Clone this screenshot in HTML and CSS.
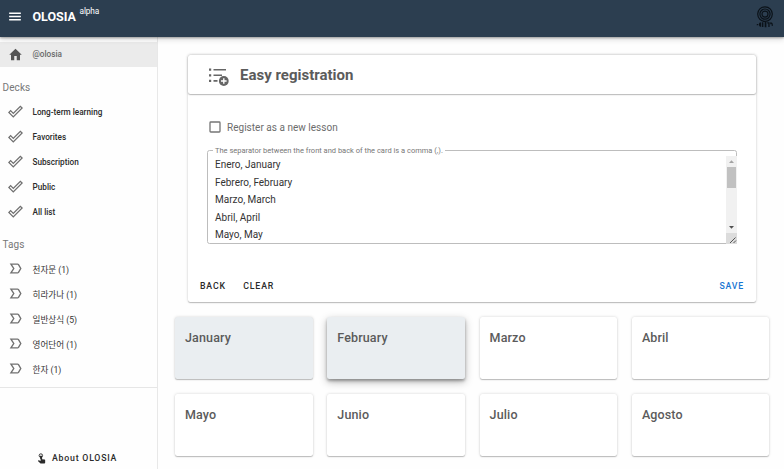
FILE: index.html
```html
<!DOCTYPE html>
<html lang="en">
<head>
<meta charset="utf-8">
<title>OLOSIA</title>
<link rel="stylesheet" href="styles.css">
</head>
<body>
<svg class="defs" width="0" height="0">
  <symbol id="check" viewBox="0 0 24 24"><path d="M19.78,2.2L24,6.42L8.44,22L0,13.55L4.22,9.33L8.44,13.55L19.78,2.2M19.78,5L8.44,16.36L4.22,12.19L2.81,13.55L8.44,19.17L21.19,6.42L19.78,5Z"/></symbol>
  <symbol id="label" viewBox="0 0 24 24"><path d="M4.7 5H15.3C15.9 5 16.4 5.3 16.8 5.8L20.4 12L16.8 18.2C16.4 18.7 15.9 19 15.3 19H4.7L9.2 12Z" fill="none" stroke="currentColor" stroke-width="2.2"/></symbol>
</svg>
<header class="appbar">
  <svg class="icon menu" viewBox="0 0 24 24"><path d="M2,5.2H22V7.8H2V5.2M2,10.7H22V13.3H2V10.7M2,16.2H22V18.8H2V16.2Z"/></svg>
  <div class="brand">OLOSIA<sup>alpha</sup></div>
  <svg class="avatar" viewBox="0 0 18 22">
    <g fill="none" stroke="#0b1219" stroke-width="1.2"><circle cx="9" cy="8.1" r="7.3"/><circle cx="9" cy="8.1" r="5.1"/><circle cx="9" cy="8.1" r="3"/></g>
    <g fill="#0b1219"><path d="M5.200 16.200v4.800a2.400 2.400 0 0 1 0-4.800M6 16.200h1.400v4.800H6zM8.700 15.800h1.700v5.400H8.700zM11.200 16.200h2.400v4.800h-1.300v-3.400h-1.100zM14.200 16.400a2 2 0 0 1 2.600 2v1.600h-1.100v-1.800h-1.500zM.800 18h1.400v1.200H.800z"/></g>
  </svg>
</header>
<div class="body">
  <nav class="sidebar">
    <a class="item active"><svg class="icon" viewBox="0 0 24 24"><path d="M10,21V14.5H14V21H19.2V12.5H22L12,2.7L2,12.5H4.8V21H10Z"/></svg><span>@olosia</span></a>
    <h2>Decks</h2>
    <a class="item"><svg class="icon"><use href="#check"/></svg><span>Long-term learning</span></a>
    <a class="item"><svg class="icon"><use href="#check"/></svg><span>Favorites</span></a>
    <a class="item"><svg class="icon"><use href="#check"/></svg><span>Subscription</span></a>
    <a class="item"><svg class="icon"><use href="#check"/></svg><span>Public</span></a>
    <a class="item"><svg class="icon"><use href="#check"/></svg><span>All list</span></a>
    <h2>Tags</h2>
    <a class="item tag"><svg class="icon"><use href="#label"/></svg><span>천자문 (1)</span></a>
    <a class="item tag"><svg class="icon"><use href="#label"/></svg><span>히라가나 (1)</span></a>
    <a class="item tag"><svg class="icon"><use href="#label"/></svg><span>일반상식 (5)</span></a>
    <a class="item tag"><svg class="icon"><use href="#label"/></svg><span>영어단어 (1)</span></a>
    <a class="item tag"><svg class="icon"><use href="#label"/></svg><span>한자 (1)</span></a>
    <div class="about">
      <svg viewBox="0 0 24 24"><path d="M10 9A1.6 1.6 0 0 1 11.6 7.4A1.6 1.6 0 0 1 13.2 9V13.5L18.6 14.2C19.6 14.4 20 15 20 16V20.5C20 22 19 23 17.5 23H11C10.3 23 9.8 22.7 9.3 22.2L4.2 17.2L5 16.3C5.3 16 5.8 15.9 6.2 16L10 17.3Z"/><circle cx="10.6" cy="5.600" r="3.800" fill="none" stroke="currentColor" stroke-width="2"/><path d="M8.500 6H13.200V13H9.500z"/></svg>
      <span>About OLOSIA</span>
    </div>
  </nav>
  <main>
    <section class="panel">
      <div class="panel-head">
        <svg viewBox="0 0 22 20"><g fill="#666"><path d="M1 1.600h2.200v2.200H1zM1 7.200h2.200v2.200H1zM1 12.800h2.200v2.200H1zM5.500 1.900H18v1.700H5.500zM5.500 7.400h8.500v1.700H5.500zM5.500 13h4v1.700h-4z"/><circle cx="15.800" cy="14" r="4.900"/></g><path d="M15.800 11.200v5.600M13 14h5.600" stroke="#fff" stroke-width="1.400"/></svg>
        <h1>Easy registration</h1>
      </div>
      <label class="check"><svg viewBox="0 0 12 12"><rect x="1" y="1" width="10" height="10" rx=".8" fill="none" stroke="#757575" stroke-width="1.300"/></svg><span>Register as a new lesson</span></label>
      <fieldset class="field">
        <legend><span>The separator between the front and back of the card is a comma (,).</span></legend>
        <div class="text">
          <div class="lines">Enero, January<br>Febrero, February<br>Marzo, March<br>Abril, April<br>Mayo, May</div>
          <div class="scroll">
            <svg viewBox="0 0 11 88"><path fill="#f1f1f1" d="M0 0h11v77H0z"/><path fill="#c1c1c1" d="M1 11h9v21H1z"/><path fill="#a3a3a3" d="M3 7h5L5.5 4.2z"/><path fill="#505050" d="M3 70h5L5.500 72.800z"/><path fill="#dcdcdc" d="M0 77h11v11H0z"/><path d="M4 87l5.500-5.500M7.500 87l2.500-2.500" stroke="#555" stroke-width="1"/></svg>
          </div>
        </div>
      </fieldset>
      <div class="actions"><span>BACK</span><span class="clear">CLEAR</span><span class="save">SAVE</span></div>
    </section>
    <section class="grid">
      <article class="card shaded">January</article>
      <article class="card shaded raised">February</article>
      <article class="card">Marzo</article>
      <article class="card">Abril</article>
      <article class="card">Mayo</article>
      <article class="card">Junio</article>
      <article class="card">Julio</article>
      <article class="card">Agosto</article>
    </section>
  </main>
</div>
</body>
</html>
```
FILE: styles.css
```css
* { box-sizing: border-box; }
body {
  margin: 0;
  height: 469px;
  overflow: hidden;
  display: flex;
  flex-direction: column;
  font-family: Roboto, "Noto Sans CJK KR", sans-serif;
  color: #2b2b2b;
  background: #fefefe;
}
.defs { display: block; flex: none; height: 0; }
.icon { width: 15px; height: 15px; fill: currentColor; flex: none; }
.appbar {
  height: 37px;
  flex: none;
  display: flex;
  align-items: flex-start;
  padding: 0 10px 0 8px;
  background: #2c3e50;
  color: #fff;
  box-shadow: 0 1px 2px rgba(0,0,0,.3), 0 2px 6px rgba(0,0,0,.17);
  position: relative;
}
.menu { margin-top: 9px; width: 14px; }
.brand { margin-left: 10.500px; font-size: 12.5px; font-weight: 700; line-height: 33px; flex: 1; }
.brand sup { font-size: 8.3px; font-weight: 400; line-height: 0; margin-left: 3.500px; vertical-align: 7.500px; letter-spacing: -.1px; }
.avatar { width: 18px; height: 22px; margin-top: 6px; }
.body { flex: 1; display: flex; min-height: 0; }
.sidebar {
  width: 158px;
  flex: none;
  border-right: 1px solid #e8e8e8;
  padding-top: 5px;
  display: flex;
  flex-direction: column;
}
.item {
  height: 25px;
  flex: none;
  display: flex;
  align-items: center;
  gap: 10px;
  padding-left: 7.500px;
  font-size: 8.2px;
  font-weight: 500;
  white-space: nowrap;
}
.item .icon { color: #707070; }
.item.active { background: #ebebeb; color: #686868; }
.item.active .icon { color: #555; margin-top: -1px; }
.item.active span { margin-top: -1px; }
.item.tag { font-size: 8.6px; font-weight: 400; color: #333; }
.sidebar h2 {
  margin: 0;
  height: 32px;
  line-height: 41px;
  padding-left: 2.500px;
  flex: none;
  font-size: 10px;
  font-weight: 400;
  letter-spacing: .1px;
  color: #777;
}
.about {
  flex: 1;
  margin-top: 6px;
  border-top: 1px solid #e6e6e6;
  display: flex;
  align-items: flex-end;
  gap: 5px;
  padding: 0 0 5px 36px;
  font-size: 8.75px;
  font-weight: 500;
  letter-spacing: .78px;
}
.about svg { width: 11px; height: 11px; fill: currentColor; }
.about span { line-height: 11px; }
main { flex: 1; min-width: 0; padding: 18px 15px 0 17px; }
.panel {
  width: 568.500px;
  height: 246.500px;
  margin: 0 auto 15.500px 12.500px;
  background: #fff;
  border-radius: 2.500px;
  display: flex;
  flex-direction: column;
  box-shadow: 0 1px 1px rgba(0,0,0,.22), 0 0 3px rgba(0,0,0,.17);
}
.panel-head {
  height: 39px;
  flex: none;
  display: flex;
  align-items: center;
  padding-left: 20px;
  border-radius: 2.500px;
  box-shadow: 0 1px 1px rgba(0,0,0,.22), 0 0 3px rgba(0,0,0,.17);
}
.panel-head svg { width: 22px; height: 20px; margin-top: 4px; }
.panel-head h1 { margin: 0 0 0 10.500px; font-size: 15px; font-weight: 700; color: #5b5b5b; }
.check {
  margin: 25.500px 0 0 21px;
  height: 14px;
  display: flex;
  align-items: center;
  gap: 6.500px;
  font-size: 10px;
  letter-spacing: .02px;
  color: #6c6c6c;
}
.check svg { width: 12px; height: 12px; }
.check span { margin-top: 1px; }
.field {
  margin: 12.500px 19.500px 0;
  width: 530px;
  height: 98px;
  flex: none;
  border: 1px solid #bdbdbd;
  border-radius: 2.500px;
  padding: 0 0 0 7px;
  min-width: 0;
}
.field legend {
  height: 9px;
  padding: 0 2px 0 2px;
  margin-left: -2px;
  font-size: 7.500px;
  line-height: 9px;
  color: #777;
}
.text { height: 88px; display: flex; justify-content: space-between; }
.lines { font-size: 10px; line-height: 17.500px; color: #333; padding-top: 1px; }
.scroll { width: 11px; height: 88px; margin-right: -1px; padding-top: 1px; }
.scroll svg { display: block; width: 11px; height: 88px; }
.actions {
  margin-top: auto;
  display: flex;
  padding: 0 12px 10px 12.500px;
  font-size: 8.75px;
  line-height: 11px;
  font-weight: 500;
  letter-spacing: .82px;
}
.clear { margin-left: 17.500px; }
.save { margin-left: auto; color: #1976d2; }
.grid {
  display: grid;
  grid-template-columns: repeat(4, 137.500px);
  gap: 15.200px 14.800px;
}
.card {
  height: 62px;
  padding: 10.600px 10px;
  background: #fff;
  border-radius: 2.500px;
  font-size: 12.5px;
  line-height: 20px;
  font-weight: 500;
  letter-spacing: .14px;
  color: #5b5b5b;
  box-shadow: 0 1px 1px rgba(0,0,0,.22), 0 0 3px rgba(0,0,0,.17);
}
.shaded { background: #eaeef1; }
.raised { box-shadow: 0 2px 3px rgba(0,0,0,.3), 0 3px 8px rgba(0,0,0,.28); }
```
